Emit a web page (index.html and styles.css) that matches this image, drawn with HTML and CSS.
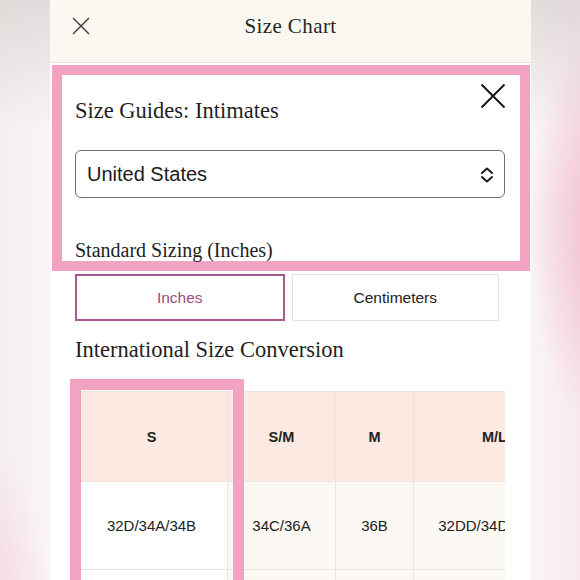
FILE: index.html
```html
<!DOCTYPE html>
<html lang="en">
<head>
<meta charset="utf-8">
<title>Size Chart</title>
<link rel="stylesheet" href="styles.css">
</head>
<body>
<div class="stage">
  <div class="phone">
    <header class="topbar">
      <span class="topbar-close" aria-label="Close">
        <svg width="18" height="18" viewBox="0 0 18 18"><path d="M1 1 L17 17 M17 1 L1 17" stroke="#3a3a3a" stroke-width="1.4" fill="none"/></svg>
      </span>
      <h1 class="topbar-title">Size Chart</h1>
      <span class="topbar-spacer"></span>
    </header>

    <section class="guide">
      <div class="guide-head">
        <h2 class="guide-title">Size Guides: Intimates</h2>
        <span class="guide-close" aria-label="Close">
          <svg width="26" height="26" viewBox="0 0 26 26"><path d="M1.5 1.5 L24.5 24.5 M24.5 1.5 L1.5 24.5" stroke="#151515" stroke-width="2" fill="none"/></svg>
        </span>
      </div>
      <div class="select">
        <span class="select-value">United States</span>
        <svg class="select-arrow" width="14" height="16" viewBox="0 0 14 16"><path d="M2 6 L7 1.5 L12 6 M2 10 L7 14.5 L12 10" stroke="#1e1e1e" stroke-width="2" fill="none" stroke-linejoin="round" stroke-linecap="round"/></svg>
      </div>
      <h3 class="guide-sub">Standard Sizing (Inches)</h3>
    </section>

    <div class="content">
      <div class="toggle">
        <span class="toggle-btn active">Inches</span>
        <span class="toggle-btn">Centimeters</span>
      </div>
      <h3 class="section-title">International Size Conversion</h3>
      <div class="table-area">
        <div class="table-scroll">
          <table class="sizes">
            <colgroup>
              <col class="c1">
              <col class="c2">
              <col class="c3">
              <col class="c4">
            </colgroup>
            <tr class="head">
              <th class="first">S</th>
              <th>S/M</th>
              <th>M</th>
              <th>M/L</th>
            </tr>
            <tr class="body">
              <td class="first">32D/34A/34B</td>
              <td>34C/36A</td>
              <td>36B</td>
              <td>32DD/34DD/36C</td>
            </tr>
            <tr class="body">
              <td class="first"></td>
              <td></td>
              <td></td>
              <td></td>
            </tr>
          </table>
        </div>
        <div class="col-highlight"></div>
      </div>
    </div>
  </div>
</div>
</body>
</html>
```

FILE: styles.css
```css
html, body {
  margin: 0;
  padding: 0;
}

body {
  width: 580px;
  height: 580px;
  overflow: hidden;
  background:
    linear-gradient(180deg, rgba(205, 200, 198, 0.55) 0, rgba(240, 236, 235, 0) 130px),
    radial-gradient(ellipse 70px 200px at 600px 230px, rgba(238, 170, 195, 0.75), rgba(238, 170, 195, 0) 100%),
    radial-gradient(ellipse 70px 160px at -20px 600px, rgba(245, 200, 214, 0.7), rgba(245, 200, 214, 0) 100%),
    linear-gradient(90deg, #f6efef 0, #faf4f4 50px, #faf4f4 530px, #f8eaee 580px);
  font-family: "Liberation Serif", "Times New Roman", serif;
  color: #222;
}

.stage {
  display: flex;
  padding-left: 50px;
}

.phone {
  width: 481px;
  height: 580px;
  background: #fff;
  overflow: hidden;
}

/* top bar */
.topbar {
  height: 62px;
  background: #fbf8f2;
  border-bottom: 1px solid #e7e3de;
  display: flex;
  align-items: center;
  padding: 0 22px;
  box-sizing: content-box;
}

.topbar-close {
  width: 18px;
  height: 18px;
  display: flex;
  margin-top: -10px;
}

.topbar-title {
  flex: 1;
  margin: -10px 0 0;
  text-align: center;
  font-weight: normal;
  font-size: 21px;
  letter-spacing: 0.4px;
  color: #262626;
}

.topbar-spacer {
  width: 18px;
}

/* highlighted guide section */
.guide {
  margin: 2px 1px 0 2px;
  border: 10px solid #f2a3c1;
  padding: 0 15px 0 13px;
  height: 186px;
  box-sizing: content-box;
}

.guide-head {
  display: flex;
  justify-content: space-between;
  align-items: flex-start;
  padding-top: 8px;
}

.guide-title {
  margin: 14px 0 0;
  font-weight: normal;
  font-size: 22.5px;
  line-height: 27px;
  color: #1f1f1f;
}

.guide-close {
  width: 26px;
  height: 26px;
  display: flex;
  margin-right: -1px;
}

.select {
  margin-top: 26px;
  height: 46px;
  border: 1px solid #6e6e6e;
  border-radius: 6px;
  display: flex;
  align-items: center;
  justify-content: space-between;
  padding: 0 10px 0 11px;
}

.select-value {
  font-family: "Liberation Sans", Arial, sans-serif;
  font-size: 20px;
  color: #1c1c1c;
}

.select-arrow {
  margin-top: 1px;
}

.guide-sub {
  margin: 40px 0 0;
  font-weight: normal;
  font-size: 20px;
  line-height: 24px;
  color: #1f1f1f;
}

/* content */
.content {
  padding: 3px 26px 0 25px;
}

.toggle {
  display: flex;
  gap: 7px;
  width: 424px;
}

.toggle-btn {
  flex: 1;
  height: 47px;
  box-sizing: border-box;
  display: flex;
  align-items: center;
  justify-content: center;
  font-family: "Liberation Sans", Arial, sans-serif;
  font-size: 15.5px;
  color: #222;
  border: 1px solid #e6e2e2;
}

.toggle-btn.active {
  border: 2px solid #a65a8c;
  color: #9a4d80;
}

.section-title {
  margin: 15px 0 0;
  font-weight: normal;
  font-size: 22.5px;
  line-height: 27px;
  color: #1f1f1f;
}

.table-area {
  position: relative;
  margin-top: 28px;
}

.table-scroll {
  width: 430px;
  overflow: hidden;
}

.sizes {
  border-collapse: collapse;
  table-layout: fixed;
  width: 500px;
  font-family: "Liberation Sans", Arial, sans-serif;
}

.sizes col.c1 { width: 152px; }
.sizes col.c2 { width: 108px; }
.sizes col.c3 { width: 78px; }
.sizes col.c4 { width: 162px; }

.sizes th,
.sizes td {
  border: 1px solid #ebe4df;
  text-align: center;
  padding: 0;
  white-space: nowrap;
  overflow: hidden;
}

.sizes tr.head th {
  height: 89px;
  background: #fce9e2;
  font-size: 14.5px;
  font-weight: bold;
  color: #222;
}

.sizes tr.body td {
  height: 87px;
  background: #fcf8f4;
  font-size: 15px;
  color: #222;
}

.sizes tr.body td.first {
  background: #fff;
}

.col-highlight {
  position: absolute;
  left: -5px;
  top: -12px;
  width: 174px;
  height: 220px;
  box-sizing: border-box;
  border: 11px solid #f2a3c1;
  pointer-events: none;
}
```
